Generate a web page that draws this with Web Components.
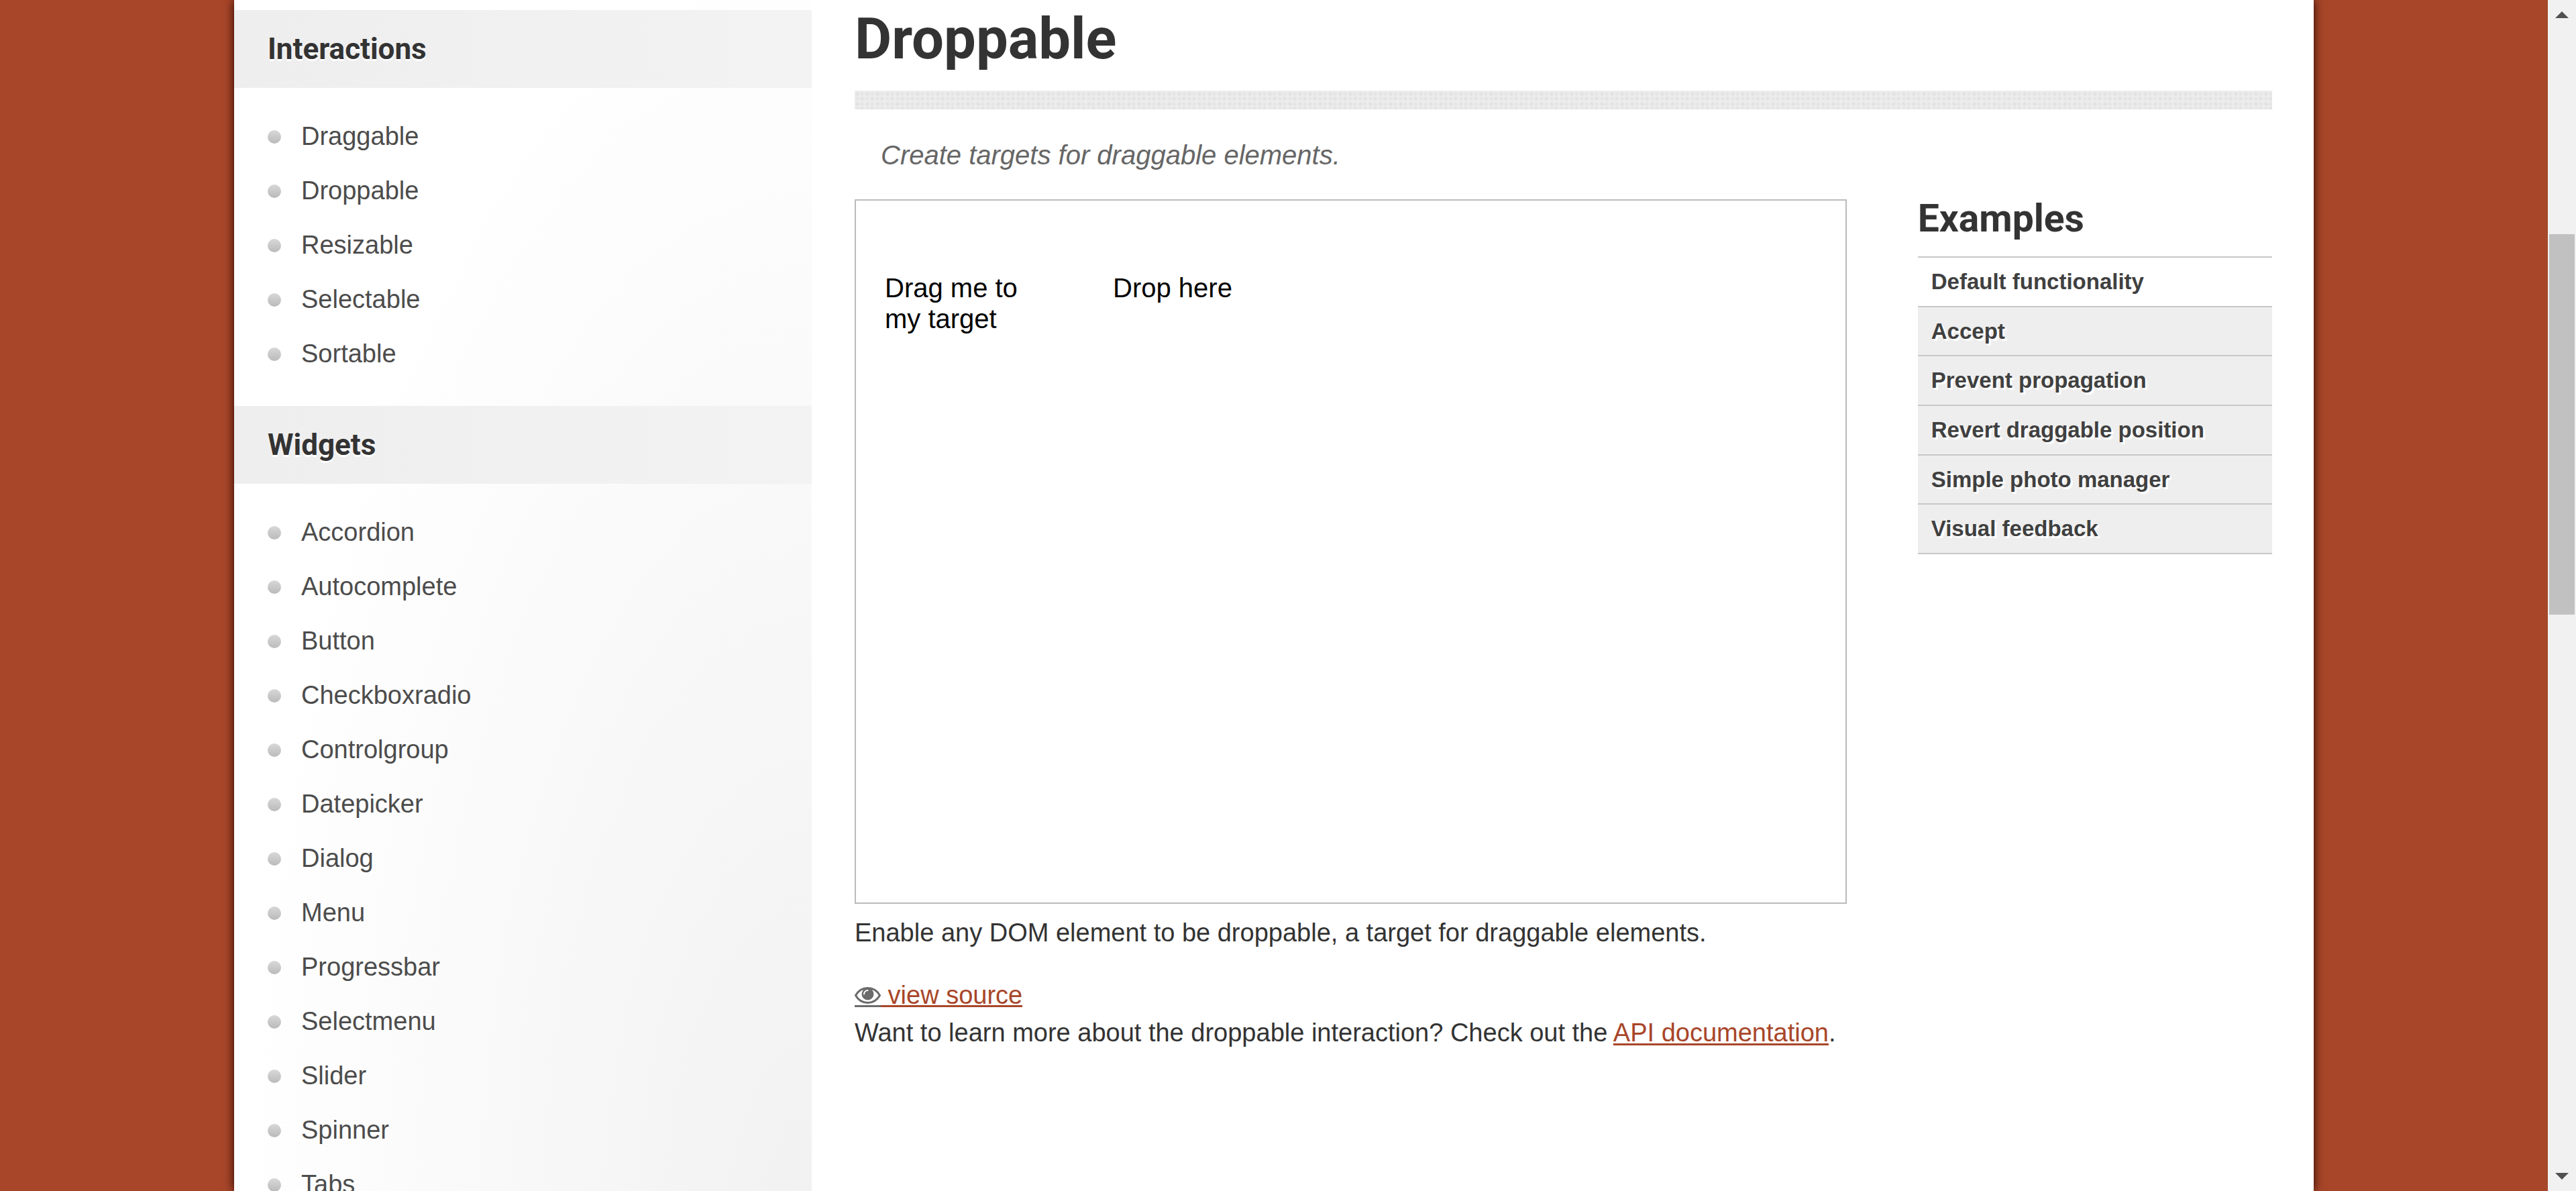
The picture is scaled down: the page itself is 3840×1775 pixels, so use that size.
<!DOCTYPE html>
<html lang="en">
<head>
<meta charset="utf-8">
<title>Droppable | jQuery UI</title>
<style>
  html, body { margin: 0; height: 100%; }
  body { overflow: hidden; background: #a84629; color: #333; font: 38px/56px "Liberation Sans", Arial, sans-serif; }
</style>
</head>
<body>
<demo-page></demo-page>
<script>
const define = (name, html, setup) => {
  const template = document.createElement('template');
  template.innerHTML = html;
  customElements.define(name, class extends HTMLElement {
    constructor() {
      super();
      this.attachShadow({ mode: 'open' }).append(template.content.cloneNode(true));
    }
    connectedCallback() { if (setup) setup(this, this.shadowRoot); }
  });
};

/* Sidebar group: heading band plus bulleted links */
define('nav-group', `
<style>
  :host { display: block; }
  h3 { margin: 0; padding: 0 50px; font: 700 44px/116px Roboto, sans-serif; color: #333;
       text-shadow: 0 3px 0 #fff; background: linear-gradient(90deg, #eee, #f3f3f3); }
  ul { list-style: none; margin: 0; padding: 32px 50px 37px; }
  li { display: flex; align-items: center; gap: 30px; line-height: 81px; }
  li::before { content: ""; width: 20px; height: 20px; border-radius: 50%;
       background: linear-gradient(#d8d8d8, #bababa); }
  a { color: #4c4c4c; text-decoration: none; text-shadow: 0 3px 0 #fff; }
</style>
<h3></h3><ul></ul>`, (host, root) => {
  root.querySelector('h3').textContent = host.getAttribute('heading');
  root.querySelector('ul').replaceChildren(...host.getAttribute('items').split(',').map(text => {
    const li = document.createElement('li'), a = document.createElement('a');
    a.href = '#' + text.toLowerCase();
    a.textContent = text;
    li.append(a);
    return li;
  }));
});

define('side-bar', `
<style>
  :host { display: block; padding-top: 15px;
    background: radial-gradient(100% 107% at 100% 100%, #f1f1f1, #fff); }
</style>
<nav aria-label="Demos">
  <nav-group heading="Interactions" items="Draggable,Droppable,Resizable,Selectable,Sortable"></nav-group>
  <nav-group heading="Widgets" items="Accordion,Autocomplete,Button,Checkboxradio,Controlgroup,Datepicker,Dialog,Menu,Progressbar,Selectmenu,Slider,Spinner,Tabs"></nav-group>
</nav>`);

define('demo-frame', `
<style>
  :host { display: flex; align-items: flex-start; gap: 100px; box-sizing: border-box; min-height: 1050px;
    padding: 107px 43px; border: 2px solid #bbb; background: #fff; color: #000; font-size: 40px; line-height: 46px; }
  p { margin: 0; }
  .drag { width: 240px; }
</style>
<p class="drag">Drag me to my target</p>
<p>Drop here</p>`);

define('example-list', `
<style>
  :host { display: block; }
  h2 { margin: 0 0 27px; font: 700 57px/58px Roboto, sans-serif; color: #333; }
  ul { list-style: none; margin: 0; padding: 0; min-height: 442px; display: flex; flex-direction: column;
    border-top: 2px solid #c8c8c8; }
  li { flex: 1; display: flex; align-items: center; padding: 0 20px; border-bottom: 2px solid #c8c8c8; background: #eee; }
  li.active { background: #fff; }
  a { font-weight: 700; font-size: 33px; line-height: 50px; color: #404040; text-decoration: none; text-shadow: 3px 3px 0 #fff; }
</style>
<h2>Examples</h2>
<ul>
  <li class="active"><a href="#default">Default functionality</a></li>
  <li><a href="#accept">Accept</a></li>
  <li><a href="#propagation">Prevent propagation</a></li>
  <li><a href="#revert">Revert draggable position</a></li>
  <li><a href="#photo-manager">Simple photo manager</a></li>
  <li><a href="#visual-feedback">Visual feedback</a></li>
</ul>`);

define('demo-content', `
<style>
  :host { display: block; padding: 0 62px 0 64px; }
  h1 { margin: 0 0 19px; font: 700 85px/116px Roboto, sans-serif; color: #333; }
  .rule { height: 28px; background:
    radial-gradient(circle at 4px 5px, #ddd, transparent 4px) 0 0 / 15px 15px,
    radial-gradient(circle at 11px 5px, #e1e1e1, transparent 4px) 0 0 / 15px 15px,
    radial-gradient(circle at 4px 12px, #e1e1e1, transparent 4px) 0 0 / 15px 15px,
    radial-gradient(circle at 11px 12px, #ddd, transparent 4px) 0 0 / 15px 15px, #ededed; }
  .desc { margin: 0; padding: 41px 39px 39px; font-size: 40px; line-height: 54px; font-style: italic; color: #666; }
  .cols { display: flex; justify-content: space-between; align-items: flex-start; }
  .demo { width: 70%; }
  example-list { width: 25%; }
  p { margin: 0; }
  .about { padding: 15px 0 37px; }
  a { color: #a84629; text-decoration-thickness: 3px; text-underline-offset: 3px; }
  .source { display: inline-flex; text-decoration: none; }
  .eye, .label { display: block; height: 43px; border-bottom: 3px solid currentColor; line-height: 56px; }
  .eye { color: #6b6b6b; }
  .eye svg { display: block; width: 39px; height: 25px; padding-top: 16px; }
  .label { white-space: pre; }
  .row { height: 56px; }
</style>
<main>
  <h1>Droppable</h1>
  <div class="rule"></div>
  <p class="desc">Create targets for draggable elements.</p>
  <div class="cols">
    <div class="demo">
      <demo-frame></demo-frame>
      <p class="about">Enable any DOM element to be droppable, a target for draggable elements.</p>
      <p class="row"><a class="source" href="#source"><span class="eye"><svg viewBox="0 0 39 25" aria-hidden="true"><path fill="none" stroke="currentColor" stroke-width="3" stroke-linejoin="round" d="M1.500 12.500C5.500 5.500 12 1.500 19.500 1.500S33.500 5.500 37.500 12.500C33.500 19.500 27 23.500 19.500 23.500S5.500 19.500 1.500 12.500Z"/><circle cx="19.500" cy="10.500" r="9" fill="currentColor"/><path fill="none" stroke="#fff" stroke-width="2" stroke-linecap="round" d="M14 10.500C14 7.500 16.500 5 19.500 5"/></svg></span><span class="label"> view source</span></a></p>
      <p>Want to learn more about the droppable interaction? Check out the <a href="#api">API documentation</a>.</p>
    </div>
    <example-list></example-list>
  </div>
</main>`);

define('page-scrollbar', `
<style>
  :host { display: flex; flex-direction: column; flex: none; width: 42px; background: #f1f1f1; }
  button { display: flex; align-items: center; justify-content: center; width: 42px; height: 44px; margin: 0; padding: 0; border: 0; background: none; }
  svg { width: 20px; height: 10px; fill: #505050; }
  .track { flex: 1; display: flex; flex-direction: column; padding: 0 2px; }
  .before { flex: 305; }
  .thumb { flex: 567; background: #c1c1c1; }
  .after { flex: 815; }
</style>
<button type="button" aria-label="Scroll up"><svg viewBox="0 0 20 10"><path d="M10 0L20 10H0Z"/></svg></button>
<div class="track"><div class="before"></div><div class="thumb"></div><div class="after"></div></div>
<button type="button" aria-label="Scroll down"><svg viewBox="0 0 20 10"><path d="M0 0H20L10 10Z"/></svg></button>`);

define('demo-page', `
<style>
  :host { display: flex; height: 100vh; }
  .view { flex: 1; overflow: hidden; display: flex; justify-content: center; }
  .paper { display: grid; grid-template-columns: 861fr 2239fr; width: 96%; max-width: 3100px; height: 100vh;
    background: #fff; box-shadow: 0 0 14px #200; }
</style>
<div class="view"><div class="paper"><side-bar></side-bar><demo-content></demo-content></div></div>
<page-scrollbar></page-scrollbar>`);
</script>
</body>
</html>
